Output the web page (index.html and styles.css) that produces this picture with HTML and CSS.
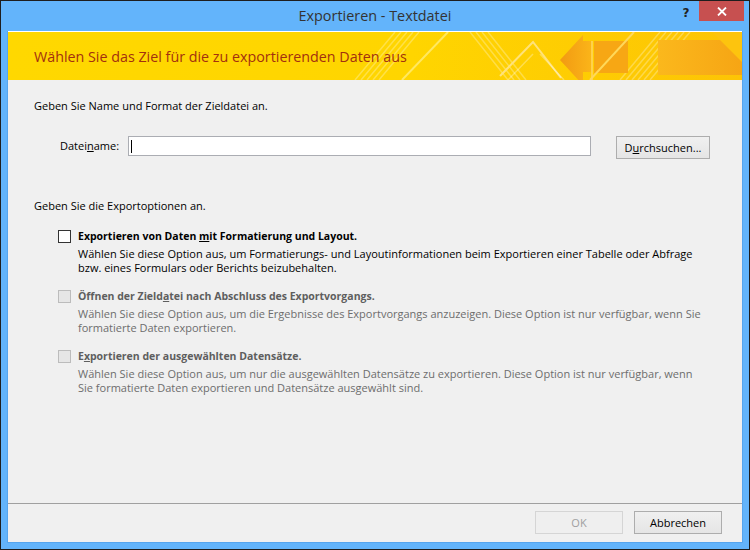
FILE: index.html
```html
<!DOCTYPE html>
<html lang="de">
<head>
  <meta charset="UTF-8">
  <title>Exportieren - Textdatei</title>
  <link rel="stylesheet" href="styles.css">
</head>
<body>
  <div class="window">
    <!-- TITLE BAR -->
    <div class="titlebar">
      <span></span>
      <span class="title">Exportieren - Textdatei</span>
      <div class="controls">
        <span class="help">?</span>
        <span class="close">
          <svg width="10" height="9" viewBox="0 0 10 9">
            <path d="M1 0.5 L9 8.5 M9 0.5 L1 8.5" stroke="#fff" stroke-width="1.8" fill="none"/>
          </svg>
        </span>
      </div>
    </div>

    <div class="client">
      <!-- BANNER -->
      <div class="banner">
        <svg class="banner-art" viewBox="0 0 734 48" preserveAspectRatio="none">
          <defs>
            <linearGradient id="bg" x1="0" y1="0" x2="1" y2="0">
              <stop offset="0" stop-color="#ffd800"/>
              <stop offset="0.55" stop-color="#ffd500"/>
              <stop offset="1" stop-color="#fdc405"/>
            </linearGradient>
            <linearGradient id="arrow" x1="0" y1="0" x2="1" y2="0">
              <stop offset="0" stop-color="#f29a12"/>
              <stop offset="1" stop-color="#fbb519"/>
            </linearGradient>
            <linearGradient id="block" x1="0" y1="0" x2="1" y2="0">
              <stop offset="0" stop-color="#fbb81c"/>
              <stop offset="1" stop-color="#f6a514"/>
            </linearGradient>
          </defs>
          <rect width="734" height="48" fill="url(#bg)"/>
          <g stroke="#fff" stroke-opacity="0.28" stroke-width="1.5">
            <path d="M347 48 L387 0 M353 48 L393 0 M359 48 L399 0 M365 48 L405 0 M371 48 L411 0"/>
            <path d="M462 0 L500 48 M468 0 L506 48 M474 0 L512 48 M480 0 L518 48"/>
            <path d="M612 48 L652 0 M618 48 L658 0 M624 48 L664 0 M630 48 L670 0 M636 48 L676 0 M642 48 L682 0"/>
          </g>
          <path d="M394 48 L440 0" stroke="#ffe860" stroke-width="2"/>
          <path d="M492 44 L525 10 L553 46" stroke="#ffe27a" stroke-width="2" fill="none"/>
          <path d="M500 48 L525 22 M532 22 L556 48" stroke="#fff" stroke-opacity="0.3" stroke-width="1.5" fill="none"/>
          <polygon points="552,28 575,3 575,9 584,9 584,40 575,40 575,53" fill="url(#arrow)"/>
          <path d="M584 9 L584 48" stroke="#ffd24a" stroke-width="2"/>
          <rect x="586" y="9" width="34" height="32" fill="#f7a714"/>
          <path d="M582 48 L626 0" stroke="#ffd85a" stroke-width="2"/>
          <rect x="650" y="8" width="84" height="35" fill="url(#block)"/>
          <polygon points="704,0 734,0 734,30" fill="#fdc40e"/>
        </svg>
        <h1 class="banner-title">Wählen Sie das Ziel für die zu exportierenden Daten aus</h1>
      </div>

      <!-- MAIN -->
      <div class="main">
        <p class="section">Geben Sie Name und Format der Zieldatei an.</p>

        <div class="file-row">
          <label class="file-label">Datei<u>n</u>ame:</label>
          <div class="input"><span class="caret"></span></div>
          <button class="btn browse">D<u>u</u>rchsuchen...</button>
        </div>

        <p class="section section-options">Geben Sie die Exportoptionen an.</p>

        <div class="options">
          <div class="option">
            <span class="check"></span>
            <div class="option-text">
              <div class="option-label">Exportieren von Daten <u>m</u>it Formatierung und Layout.</div>
              <div class="option-desc">Wählen Sie diese Option aus, um Formatierungs- und Layoutinformationen beim Exportieren einer Tabelle oder Abfrage<br>bzw. eines Formulars oder Berichts beizubehalten.</div>
            </div>
          </div>
          <div class="option disabled">
            <span class="check"></span>
            <div class="option-text">
              <div class="option-label">Öffnen der Zield<u>a</u>tei nach Abschluss des Exportvorgangs.</div>
              <div class="option-desc">Wählen Sie diese Option aus, um die Ergebnisse des Exportvorgangs anzuzeigen. Diese Option ist nur verfügbar, wenn Sie<br>formatierte Daten exportieren.</div>
            </div>
          </div>
          <div class="option disabled">
            <span class="check"></span>
            <div class="option-text">
              <div class="option-label">E<u>x</u>portieren der ausgewählten Datensätze.</div>
              <div class="option-desc">Wählen Sie diese Option aus, um nur die ausgewählten Datensätze zu exportieren. Diese Option ist nur verfügbar, wenn<br>Sie formatierte Daten exportieren und Datensätze ausgewählt sind.</div>
            </div>
          </div>
        </div>
      </div>

      <!-- FOOTER -->
      <div class="footer">
        <button class="btn" disabled>OK</button>
        <button class="btn">Abbrechen</button>
      </div>
    </div>
  </div>
</body>
</html>
```

FILE: styles.css
```css
body {
  margin: 0;
  font-family: "Segoe UI", "Open Sans", "Noto Sans", sans-serif;
  font-size: 11px;
  color: #000;
}

.window {
  width: 750px;
  height: 550px;
  box-sizing: border-box;
  border: 1px solid #1e1e1e;
  background: #63b4fb;
  display: flex;
  flex-direction: column;
}

/* Title bar */
.titlebar {
  height: 30px;
  display: grid;
  grid-template-columns: 1fr auto 1fr;
  align-items: start;
}

.title {
  font-size: 14.4px;
  color: #333;
  line-height: 30px;
}

.controls {
  display: flex;
  justify-content: flex-end;
  margin-right: 5px;
}

.help {
  width: 26px;
  height: 22px;
  font-family: "DejaVu Sans", sans-serif;
  font-weight: bold;
  font-size: 12px;
  line-height: 24px;
  text-align: center;
  color: #222;
}

.close {
  width: 45px;
  height: 20px;
  background: #c75050;
  display: flex;
  align-items: center;
  justify-content: center;
}

/* Client area */
.client {
  flex: 1;
  margin: 0 6px 6px 6px;
  border: 1px solid #56a5ee;
  border-top: none;
  background: #f0f0f0;
  display: flex;
  flex-direction: column;
}

.banner {
  position: relative;
  height: 48px;
  border-top: 1px solid #fff;
  display: flex;
  align-items: center;
}

.banner-art {
  position: absolute;
  top: 0;
  left: 0;
  width: 100%;
  height: 100%;
}

.banner-title {
  position: relative;
  margin: 0 0 0 26px;
  font-size: 14.3px;
  font-weight: normal;
  color: #a3300f;
}

.main {
  flex: 1;
  padding: 18px 0 0 26px;
}

.section {
  margin: 0;
  line-height: 15px;
}

.section-options {
  margin-top: 39px;
}

.file-row {
  display: flex;
  align-items: flex-start;
  margin-top: 23px;
  margin-left: 26px;
}

.file-label {
  width: 68px;
  line-height: 20px;
}

.input {
  width: 461px;
  height: 18px;
  border: 1px solid #abadb3;
  background: #fff;
  display: flex;
  align-items: center;
}

.caret {
  width: 1px;
  height: 13px;
  margin-left: 2px;
  background: #000;
}

.btn {
  font-family: inherit;
  font-size: 11px;
  color: #000;
  width: 88px;
  height: 23px;
  padding: 0;
  border: 1px solid #adadad;
  background: linear-gradient(#f0f0f0, #e5e5e5);
}

.btn:disabled {
  color: #a0a0a0;
  border-color: #d5d5d5;
  background: #efefef;
}

.browse {
  width: 94px;
  margin-left: 25px;
}

.options {
  margin-top: 17px;
  margin-left: 24px;
}

.option {
  display: flex;
  gap: 7px;
  margin-bottom: 15px;
}

.check {
  width: 11px;
  height: 11px;
  border: 1px solid #333;
  background: #fff;
  flex-shrink: 0;
}

.option-label {
  font-weight: bold;
  font-size: 10.5px;
  line-height: 13px;
}

.option-desc {
  margin-top: 4px;
  line-height: 14px;
  white-space: nowrap;
}

.option.disabled .check {
  border-color: #bcbcbc;
  background: #e6e6e6;
}

.option.disabled .option-label {
  color: #5e5e5e;
}

.option.disabled .option-desc {
  color: #6d6d6d;
}

.footer {
  height: 39px;
  border-top: 1px solid #a0a0a0;
  display: flex;
  justify-content: flex-end;
  align-items: flex-start;
  gap: 11px;
  padding: 7px 20px 0 0;
  box-sizing: border-box;
}
```
